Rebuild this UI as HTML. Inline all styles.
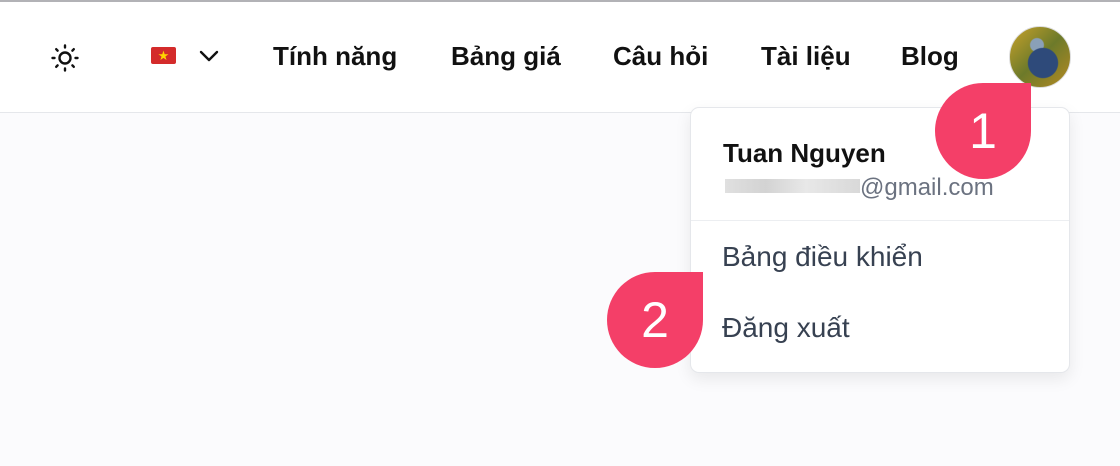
<!DOCTYPE html>
<html><head><meta charset="utf-8"><style>
body{margin:0;width:1120px;height:466px;overflow:hidden;background:#fbfbfd;font-family:"Liberation Sans",sans-serif;position:relative}
.top{position:absolute;left:0;top:0;width:1120px;height:2px;background:#b2b2b6}
.hdr{position:absolute;left:0;top:2px;width:1120px;height:110px;background:#fff;border-bottom:1px solid #e5e7eb}
.nav{position:absolute;top:41px;font-size:26px;font-weight:bold;color:#111}
.av{position:absolute;left:1009px;top:26px;width:62px;height:62px;border-radius:50%;background:radial-gradient(circle at 55% 60%,#2e4a7a 0 30%,transparent 32%),radial-gradient(circle at 45% 30%,#8aa0b8 0 12%,transparent 14%),linear-gradient(135deg,#c9a22a,#6d7a2a 50%,#b58a22);border:1px solid #ddd;box-sizing:border-box}
.dd{position:absolute;left:690px;top:107px;width:380px;height:266px;background:#fff;border:1px solid #e5e7eb;border-radius:9px;box-shadow:0 6px 16px rgba(0,0,0,.08);box-sizing:border-box}
.badge{position:absolute;width:96px;height:96px;background:#f43f68;border-radius:50% 0 50% 50%;color:#fff;font-size:50px;text-align:center;line-height:96px}
</style></head><body>
<div class="top"></div>
<div class="hdr"></div>
<svg style="position:absolute;left:50px;top:43px" width="30" height="30" viewBox="0 0 30 30" fill="none" stroke="#111" stroke-width="2.4" stroke-linecap="round"><circle cx="15" cy="15" r="5.5"/><path d="M15 2.5v2M15 25.5v2M2.5 15h2M25.5 15h2M6.2 6.2l1.4 1.4M22.4 22.4l1.4 1.4M6.2 23.8l1.4-1.4M22.4 7.6l1.4-1.4"/></svg>
<div style="position:absolute;left:151px;top:47px;width:25px;height:17px;background:#d42b2b;border-radius:2px;color:#ffd400;font-size:13px;line-height:17px;text-align:center">★</div>
<svg style="position:absolute;left:198px;top:48px" width="22" height="16" viewBox="0 0 22 16" fill="none" stroke="#111" stroke-width="2.4" stroke-linecap="round" stroke-linejoin="round"><path d="M3 4l8 8 8-8"/></svg>
<div class="nav" style="left:273px">Tính năng</div>
<div class="nav" style="left:451px">Bảng giá</div>
<div class="nav" style="left:613px">Câu hỏi</div>
<div class="nav" style="left:761px">Tài liệu</div>
<div class="nav" style="left:901px">Blog</div>
<div class="av"></div>
<div class="dd">
 <div style="position:absolute;left:32px;top:30px;font-size:26px;font-weight:bold;color:#111">Tuan Nguyen</div>
 <div style="position:absolute;left:34px;top:71px;width:135px;height:14px;background:linear-gradient(90deg,#d8d8d8,#c8c8c8 30%,#e2e2e2 60%,#cfcfcf);opacity:.8"></div>
 <div style="position:absolute;left:169px;top:66px;font-size:24px;color:#6b7280">@gmail.com</div>
 <div style="position:absolute;left:0;top:112px;width:378px;height:1px;background:#eceef1"></div>
 <div style="position:absolute;left:31px;top:133px;font-size:28px;color:#374151">Bảng điều khiển</div>
 <div style="position:absolute;left:31px;top:204px;font-size:28px;color:#374151">Đăng xuất</div>
</div>
<div class="badge" style="left:935px;top:83px">1</div>
<div class="badge" style="left:607px;top:272px">2</div>
</body></html>
